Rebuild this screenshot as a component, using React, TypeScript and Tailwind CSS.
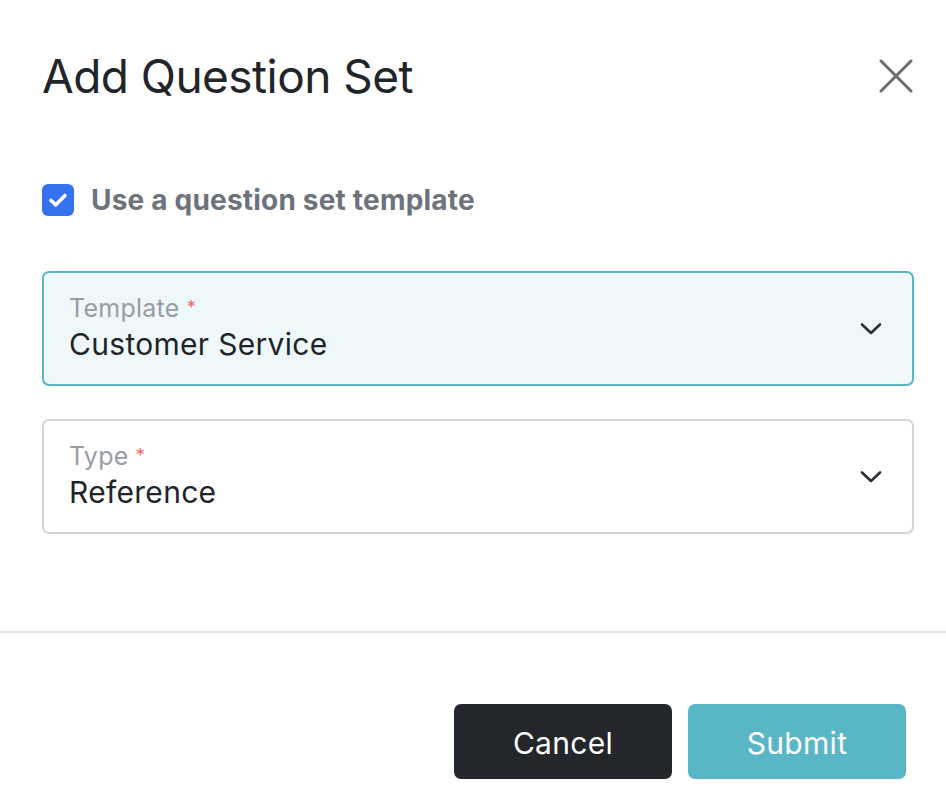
export default function App() {
  const font = { fontFamily: 'Inter, "Noto Sans", sans-serif' }

  const Chevron = () => (
    <svg width="22" height="14" viewBox="0 0 22 14" fill="none" className="shrink-0">
      <path d="M2 2.5 L11 11 L20 2.5" stroke="#2b2f33" strokeWidth="2.6" strokeLinecap="round" strokeLinejoin="round" />
    </svg>
  )

  return (
    <div className="w-[946px] h-[808px] bg-white overflow-hidden text-[#212529]" style={font}>
      {/* ── Header ── */}
      <div className="flex items-center justify-between pl-[42px] pr-[32px] pt-[46px] h-[106px]">
        <h1 className="text-[46px] leading-none font-normal tracking-[-0.012em] text-[#212529]">Add Question Set</h1>
        <button className="w-[36px] h-[36px] flex items-center justify-center">
          <svg width="34" height="34" viewBox="0 0 34 34" fill="none">
            <path d="M2 2 L32 32 M32 2 L2 32" stroke="#6c6c6c" strokeWidth="3" strokeLinecap="round" />
          </svg>
        </button>
      </div>

      {/* ── Body ── */}
      <div className="pl-[42px] pr-[32px] pt-[78px]">
        <label className="flex items-center gap-[17px] h-[32px]">
          <span className="w-[32px] h-[32px] rounded-[6px] bg-[#3572f0] flex items-center justify-center">
            <svg width="20" height="16" viewBox="0 0 20 16" fill="none">
              <path d="M3 8.5 L7.8 12.8 L17 3.5" stroke="white" strokeWidth="3.6" strokeLinecap="round" strokeLinejoin="round" />
            </svg>
          </span>
          <span className="text-[28px] font-bold tracking-[0.007em] text-[#6c737c]">Use a question set template</span>
        </label>

        <div className="mt-[55px] h-[115px] rounded-[7px] border-2 border-[#5ab4c4] bg-[#eef7f9] flex items-center justify-between pl-[25px] pr-[30px]">
          <div className="flex flex-col pt-[3px]">
            <span className="text-[25px] leading-[28px] tracking-[0.01em] text-[#989ca4]">
              Template <span className="text-[#ef6b6b] text-[18px] align-top">*</span>
            </span>
            <span className="text-[30px] leading-[44px] tracking-[0.01em] text-[#212529]">Customer Service</span>
          </div>
          <Chevron />
        </div>

        <div className="mt-[33px] h-[115px] rounded-[7px] border-2 border-[#d3d5d8] bg-white flex items-center justify-between pl-[25px] pr-[30px]">
          <div className="flex flex-col pt-[3px]">
            <span className="text-[25px] leading-[28px] tracking-[0.01em] text-[#989ca4]">
              Type <span className="text-[#ef6b6b] text-[18px] align-top">*</span>
            </span>
            <span className="text-[30px] leading-[44px] tracking-[0.01em] text-[#212529]">Reference</span>
          </div>
          <Chevron />
        </div>
      </div>

      {/* ── Footer ── */}
      <div className="mt-[97px] border-t-2 border-[#dee2e6] flex justify-end gap-[16px] pr-[40px] pt-[71px]">
        <button className="w-[218px] h-[75px] rounded-[7px] bg-[#23262a] text-white text-[30px] tracking-[0.01em] pt-[3px]">Cancel</button>
        <button className="w-[218px] h-[75px] rounded-[7px] bg-[#59b6c6] text-white text-[30px] tracking-[0.01em] pt-[3px]">Submit</button>
      </div>
    </div>
  )
}
